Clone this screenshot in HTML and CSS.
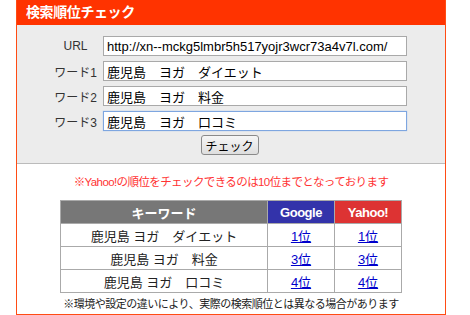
FILE: index.html
```html
<!DOCTYPE html>
<html lang="ja">

<head>
    <meta charset="UTF-8" />
    <title>検索順位チェック</title>
    <link rel="stylesheet" href="styles.css">
</head>

<body>
    <div class="panel">
        <div class="panel-head">検索順位チェック</div>

        <!-- 入力フォーム -->
        <div class="form-area">
            <div class="form-grid">
                <label class="form-label" for="url">URL</label>
                <input type="text" id="url" class="text-input" value="http://xn--mckg5lmbr5h517yojr3wcr73a4v7l.com/" />
                <label class="form-label" for="word1">ワード1</label>
                <input type="text" id="word1" class="text-input" value="鹿児島　ヨガ　ダイエット" />
                <label class="form-label" for="word2">ワード2</label>
                <input type="text" id="word2" class="text-input" value="鹿児島　ヨガ　料金" />
                <label class="form-label" for="word3">ワード3</label>
                <input type="text" id="word3" class="text-input is-focus" value="鹿児島　ヨガ　口コミ" />
                <div class="form-actions">
                    <button type="button" class="check-btn">チェック</button>
                </div>
            </div>
        </div>

        <!-- 結果 -->
        <div class="result-area">
            <p class="notice">※Yahoo!の順位をチェックできるのは10位までとなっております</p>
            <table class="rank-table">
                <thead>
                    <tr>
                        <th class="col-word">キーワード</th>
                        <th class="col-google">Google</th>
                        <th class="col-yahoo">Yahoo!</th>
                    </tr>
                </thead>
                <tbody>
                    <tr>
                        <td>鹿児島 ヨガ　ダイエット</td>
                        <td><a href="#">1位</a></td>
                        <td><a href="#">1位</a></td>
                    </tr>
                    <tr>
                        <td>鹿児島 ヨガ　料金</td>
                        <td><a href="#">3位</a></td>
                        <td><a href="#">3位</a></td>
                    </tr>
                    <tr>
                        <td>鹿児島 ヨガ　口コミ</td>
                        <td><a href="#">4位</a></td>
                        <td><a href="#">4位</a></td>
                    </tr>
                </tbody>
            </table>
            <p class="footnote">※環境や設定の違いにより、実際の検索順位とは異なる場合があります</p>
        </div>
    </div>
</body>

</html>
```

FILE: styles.css
```css
body {
    margin: 0;
    font-family: "Liberation Sans", "Noto Sans CJK JP", sans-serif;
    font-size: 12px;
    color: #222;
    background: #fff;
}

.panel {
    margin-left: 16px;
    width: 430px;
    height: 315px;
    box-sizing: border-box;
    border: 1px solid #ff4c14;
    border-top: none;
    background: #fff;
}

.panel-head {
    height: 25px;
    line-height: 25px;
    padding-left: 9px;
    background: #ff3300;
    color: #fff;
    font-size: 14px;
    font-weight: bold;
    letter-spacing: -0.4px;
}

.form-area {
    background: #ececec;
    height: 139px;
    box-sizing: border-box;
    padding: 11px 0 0 35px;
    border-bottom: 1px solid #bbb;
}

.form-grid {
    display: grid;
    grid-template-columns: 47px 304px;
    column-gap: 4px;
    row-gap: 5px;
    align-items: center;
}

.form-label {
    text-align: center;
    color: #333;
    font-size: 12px;
}

.text-input {
    height: 20px;
    box-sizing: border-box;
    margin: 0;
    padding: 0 3px;
    border: 1px solid #a9a9a9;
    background: #fff;
    font-family: "Liberation Sans", "Noto Sans CJK JP", sans-serif;
    font-size: 13px;
    color: #000;
}

.text-input.is-focus {
    border-color: #7ea6e0;
    box-shadow: 0 0 1px #9cbcec;
}

.form-actions {
    grid-column: 1 / 3;
    display: flex;
    justify-content: center;
    margin-top: -1px;
}

.check-btn {
    width: 58px;
    height: 20px;
    padding: 0;
    font-family: "Liberation Sans", "Noto Sans CJK JP", sans-serif;
    font-size: 12px;
    color: #000;
    background: linear-gradient(#f6f6f6, #dedede);
    border: 1px solid #8a8a8a;
    border-radius: 3px;
}

.result-area {
    padding-top: 10px;
}

.notice {
    margin: 0;
    text-align: center;
    color: #ff3333;
    font-size: 11.5px;
    line-height: 16px;
    letter-spacing: -0.6px;
}

.rank-table {
    margin: 10px auto 0;
    width: 342px;
    border-collapse: collapse;
    font-size: 13px;
}

.rank-table th,
.rank-table td {
    border: 1px solid #aaa;
    text-align: center;
    height: 22px;
    padding: 0;
}

.rank-table th {
    color: #fff;
    font-weight: bold;
    font-size: 13px;
}

.rank-table .col-word {
    width: 206px;
    background: #777;
}

.rank-table .col-google {
    width: 66px;
    background: #3333aa;
    letter-spacing: -0.5px;
}

.rank-table .col-yahoo {
    background: #dd3333;
    letter-spacing: -0.5px;
}

.rank-table a {
    color: #0000cc;
}

.footnote {
    margin: 2px 0 0;
    text-align: center;
    font-size: 11px;
    color: #222;
    letter-spacing: -0.5px;
}
```
